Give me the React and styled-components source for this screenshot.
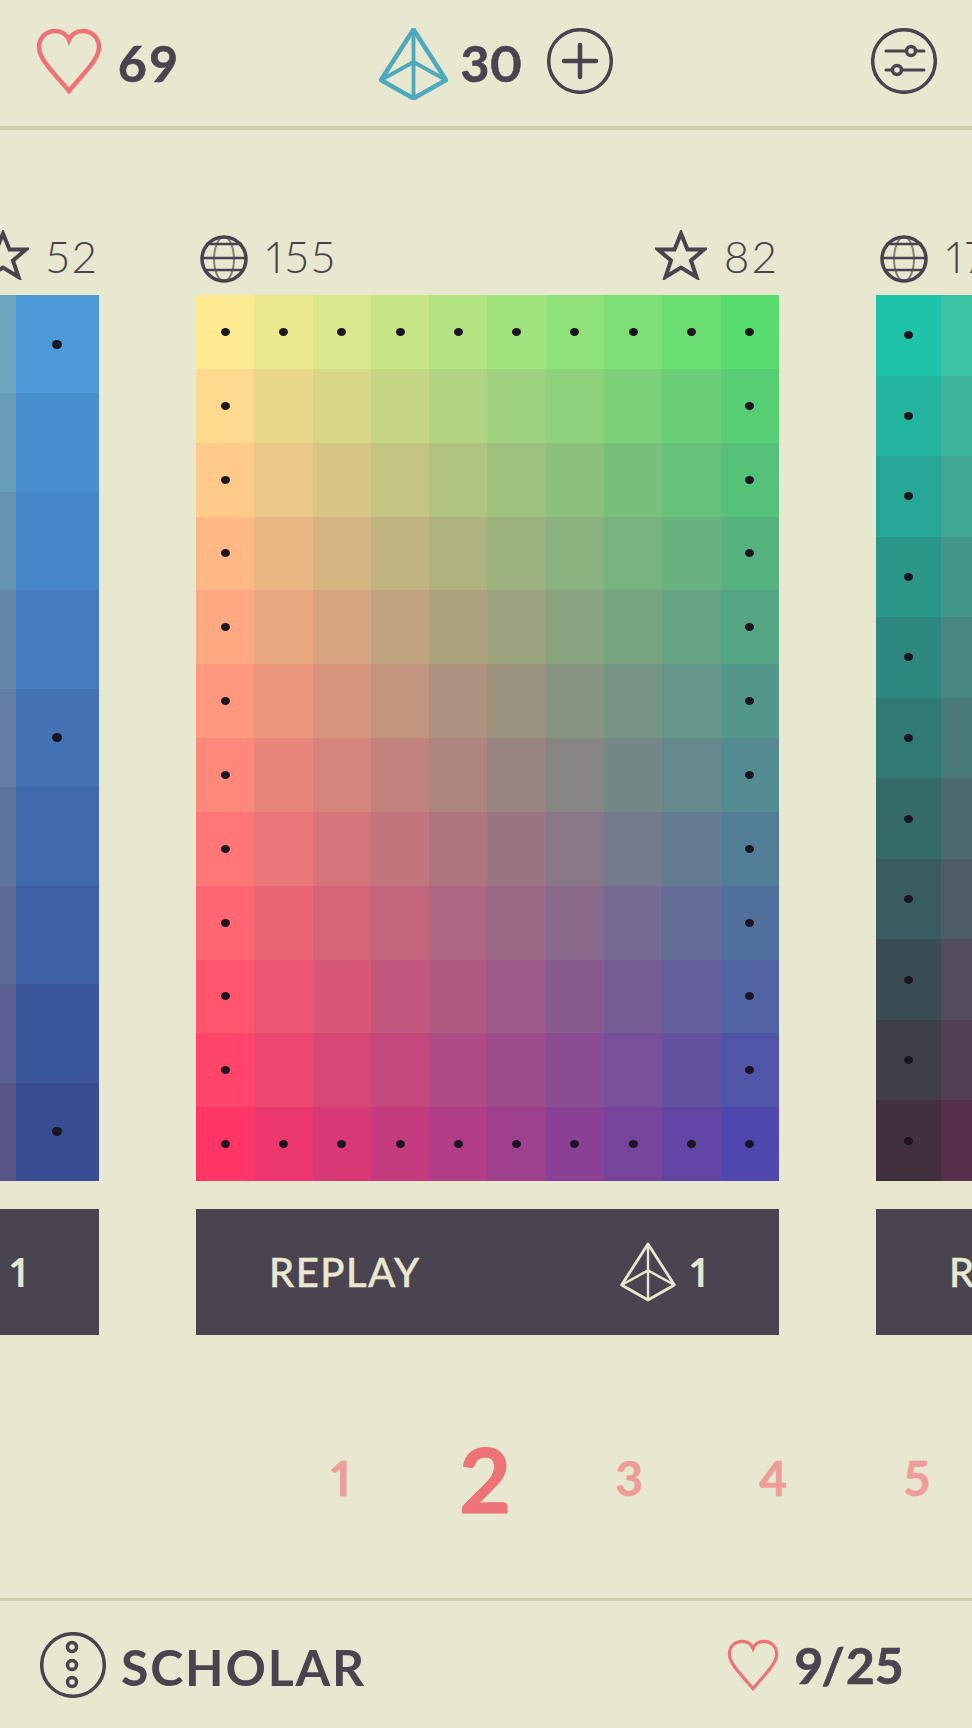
import styled, { createGlobalStyle } from "styled-components";

const GlobalStyle = createGlobalStyle`
  html, body {
    margin: 0;
    background: #e8e7cf;
  }
`;

const Page = styled.div`
  width: 972px;
  height: 1728px;
  overflow: hidden;
  background: #e8e7cf;
  color: #4a4450;
  font-family: "Lato", sans-serif;
  font-variant-numeric: proportional-nums;
  display: flex;
  flex-direction: column;
`;

const Header = styled.header`
  height: 98px;
  flex-shrink: 0;
  padding: 28px 35px 0 36px;
  display: flex;
  align-items: flex-start;
  border-bottom: 4px solid #cfccb0;
`;

const Stat = styled.div`
  display: flex;
  align-items: flex-start;
  margin-left: ${(p) => p.$offset || 0}px;
`;

const Count = styled.span`
  font-size: 50px;
  font-weight: 700;
  line-height: 70px;
  letter-spacing: ${(p) => p.$spacing ?? 3}px;
  margin-left: ${(p) => p.$gap || 14}px;
  -webkit-text-stroke: 0.6px #4a4450;
`;

const IconWrap = styled.span`
  display: block;
  margin-left: ${(p) => (p.$push ? "auto" : `${p.$gap || 0}px`)};
  margin-top: ${(p) => (p.$lift ? -p.$lift : 0)}px;
  line-height: 0;
`;

const Carousel = styled.section`
  display: flex;
  justify-content: center;
  gap: 97px;
  padding: 101px 0 0 3px;
  overflow: hidden;
`;

const Card = styled.article`
  width: 583px;
  flex-shrink: 0;
`;

const CardTop = styled.div`
  height: 60px;
  padding: 4px 0 0 4px;
  display: flex;
  justify-content: space-between;
  align-items: flex-start;
`;

const Meta = styled.div`
  display: flex;
  align-items: center;
  height: 48px;
  font-size: 44px;
  font-weight: 300;
  letter-spacing: 2.5px;
`;

const MetaLabel = styled.span`
  margin: 0 0 7px ${(p) => p.$gap}px;
  line-height: 48px;
`;

const Swatches = styled.div`
  height: 886px;
  display: grid;
  grid-template-columns: repeat(${(p) => p.$cols}, 1fr);
  grid-template-rows: repeat(${(p) => p.$rows}, 1fr);
`;

const Cell = styled.div`
  display: flex;
  align-items: center;
  justify-content: center;
`;

const Dot = styled.span`
  width: ${(p) => p.$size}px;
  height: ${(p) => p.$size - 1}px;
  border-radius: 50%;
  background: #1a1520;
`;

const ReplayButton = styled.button`
  width: 100%;
  height: 126px;
  margin: 28px 0 0;
  padding: 0 72px 0 73px;
  border: 0;
  background: #4a4450;
  color: #e8e7cf;
  font-family: inherit;
  font-variant-numeric: proportional-nums;
  display: flex;
  align-items: center;
  justify-content: space-between;
`;

const ReplayLabel = styled.span`
  font-size: 40px;
  font-weight: 500;
  letter-spacing: 1.5px;
  -webkit-text-stroke: 0.4px #e8e7cf;
`;

const ReplayCost = styled.span`
  display: flex;
  align-items: center;
  gap: 15px;
  font-size: 40px;
  font-weight: 700;
`;

const Pager = styled.nav`
  height: 263px;
  flex-shrink: 0;
  box-sizing: border-box;
  padding: 22px 0 0 269px;
  display: flex;
  align-items: center;
`;

const PageNumber = styled.span`
  width: 144px;
  flex-shrink: 0;
  text-align: center;
  font-weight: 700;
  font-size: ${(p) => (p.$active ? 90 : 48)}px;
  color: ${(p) => (p.$active ? "#ee7377" : "#ee9d98")};
  -webkit-text-stroke: ${(p) => (p.$active ? 1 : 0.5)}px currentColor;
`;

const Footer = styled.footer`
  border-top: 3px solid #cfccb0;
  flex: 1;
  padding: 31px 68px 0 40px;
  display: flex;
  justify-content: space-between;
  align-items: flex-start;
`;

const FooterTitle = styled.span`
  font-size: 50px;
  font-weight: 700;
  line-height: 70px;
  letter-spacing: 1.8px;
  margin-left: 15px;
`;

const Goal = styled.div`
  display: flex;
  align-items: center;
  height: 66px;
`;

const lerp = (a, b, t) => a + (b - a) * t;

// bilinear mix of the four corner colours, with a slightly darker middle
function mix(corners, u, v, sag) {
  const { tl, tr, bl, br } = corners;
  const dip = sag * 16 * u * (1 - u) * v * (1 - v);
  const parts = tl.map((_, i) =>
    Math.round(lerp(lerp(tl[i], tr[i], u), lerp(bl[i], br[i], u), v) - dip)
  );
  return `rgb(${parts.join(",")})`;
}

const palettes = [
  {
    cols: 7,
    rows: 9,
    dotSize: 10,
    corners: {
      tl: [251, 232, 66],
      tr: [77, 154, 216],
      bl: [255, 130, 86],
      br: [56, 76, 146],
    },
    sag: 0,
    hasDot: (r, c) => c === 6 && r % 4 === 0,
    faved: 52,
    plays: 96,
  },
  {
    cols: 10,
    rows: 12,
    dotSize: 9,
    corners: {
      tl: [253, 235, 146],
      tr: [88, 220, 110],
      bl: [255, 53, 102],
      br: [79, 71, 173],
    },
    sag: 5,
    hasDot: (r, c) => r === 0 || r === 11 || c === 0 || c === 9,
    faved: 82,
    plays: 155,
  },
  {
    cols: 9,
    rows: 11,
    dotSize: 9,
    corners: {
      tl: [31, 195, 169],
      tr: [255, 195, 121],
      bl: [66, 48, 63],
      br: [226, 48, 151],
    },
    sag: 0,
    hasDot: (r, c) => c === 0,
    faved: 64,
    plays: 172,
  },
];

function Heart({ size, stroke }) {
  return (
    <svg width={size} height={size} viewBox="0 0 66 66" fill="none" stroke="#ee7377" strokeWidth={stroke} strokeLinejoin="miter">
      <path d="M33 63C20 47 3 32 3 19 3 9 11 3 19 3c7 0 12 4 14 9 2-5 7-9 14-9 8 0 16 6 16 16 0 13-17 28-30 44Z" />
    </svg>
  );
}

function Pyramid({ width, height, color, stroke }) {
  return (
    <svg width={width} height={height} viewBox="0 0 69 72" fill="none" stroke={color} strokeWidth={stroke} strokeLinejoin="round">
      <path d="M34.5 1.5 2 52l32.500 18.500L67 52Z" />
      <path d="M34.500 1.500v69M2 52l32.500-18L67 52" strokeWidth={stroke * 0.85} />
    </svg>
  );
}

function Ring({ children }) {
  return (
    <svg width="66" height="66" viewBox="0 0 66 66" fill="none" stroke="#4a4450" strokeWidth="3.500" strokeLinecap="round">
      <circle cx="33" cy="33" r="31.300" />
      {children}
    </svg>
  );
}

function Globe() {
  return (
    <svg width="48" height="48" viewBox="0 0 48 48" fill="none" stroke="#4a4450" strokeWidth="3.500">
      <circle cx="24" cy="24" r="22" />
      <path d="M6 9h36M2 23h44M4 35h40" strokeWidth="2.500" />
      <ellipse cx="24" cy="24" rx="10" ry="22" strokeWidth="2" opacity="0.65" />
    </svg>
  );
}

function Star() {
  return (
    <svg width="52" height="50" viewBox="0 0 52 50" fill="none" stroke="#4a4450" strokeWidth="4" strokeLinejoin="miter">
      <path d="M26 3.500 32.500 19.500 49 19.500 36 30.500 41.500 47 26 37.500 10.500 47 16 30.500 3 19.500 19.500 19.500Z" />
    </svg>
  );
}

function Palette({ data }) {
  const cells = [];
  for (let r = 0; r < data.rows; r++) {
    for (let c = 0; c < data.cols; c++) {
      const color = mix(data.corners, c / (data.cols - 1), r / (data.rows - 1), data.sag);
      cells.push(
        <Cell key={`${r}-${c}`} style={{ background: color }}>
          {data.hasDot(r, c) && <Dot $size={data.dotSize} />}
        </Cell>
      );
    }
  }
  return (
    <Card>
      <CardTop>
        <Meta>
          <Globe />
          <MetaLabel $gap={18}>{data.plays}</MetaLabel>
        </Meta>
        <Meta>
          <IconWrap $lift={8}>
            <Star />
          </IconWrap>
          <MetaLabel $gap={17}>{data.faved}</MetaLabel>
        </Meta>
      </CardTop>
      <Swatches $cols={data.cols} $rows={data.rows}>
        {cells}
      </Swatches>
      <ReplayButton>
        <ReplayLabel>REPLAY</ReplayLabel>
        <ReplayCost>
          <Pyramid width={56} height={60} color="#e8e7cf" stroke={3.5} />1
        </ReplayCost>
      </ReplayButton>
    </Card>
  );
}

export default function App() {
  return (
    <Page>
      <GlobalStyle />
      <Header>
        <Stat>
          <Heart size={66} stroke={4.5} />
          <Count $gap={16}>69</Count>
        </Stat>
        <Stat $offset={199}>
          <Pyramid width={69} height={72} color="#4fa9bd" stroke={4.5} />
          <Count $gap={12} $spacing={0}>30</Count>
          <IconWrap $gap={24}>
            <Ring>
              <path d="M17 33h32M33 17v32" strokeWidth="4.500" />
            </Ring>
          </IconWrap>
        </Stat>
        <IconWrap $push>
          <Ring>
            <path d="M15 23h38M15 42h38" strokeWidth="3" />
            <circle cx="40" cy="23" r="4.500" fill="#e8e7cf" />
            <circle cx="26" cy="42" r="4.500" fill="#e8e7cf" />
          </Ring>
        </IconWrap>
      </Header>
      <Carousel>
        {palettes.map((p) => (
          <Palette key={p.plays} data={p} />
        ))}
      </Carousel>
      <Pager>
        {[1, 2, 3, 4, 5].map((n) => (
          <PageNumber key={n} $active={n === 2}>
            {n}
          </PageNumber>
        ))}
      </Pager>
      <Footer>
        <Stat>
          <Ring>
            <circle cx="32" cy="15" r="4.500" />
            <circle cx="32" cy="33" r="4.500" />
            <circle cx="32" cy="50" r="4.500" />
          </Ring>
          <FooterTitle>SCHOLAR</FooterTitle>
        </Stat>
        <Goal>
          <Heart size={52} stroke={4} />
          <Count $gap={16} $spacing={1}>9/25</Count>
        </Goal>
      </Footer>
    </Page>
  );
}
